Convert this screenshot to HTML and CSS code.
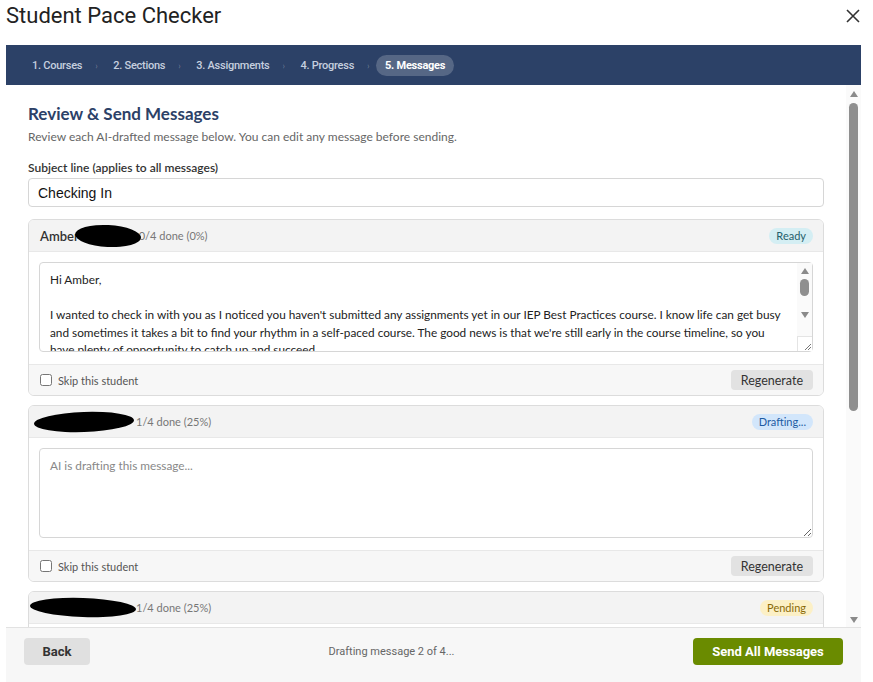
FILE: index.html
```html
<!DOCTYPE html>
<html lang="en">
<head>
  <meta charset="UTF-8">
  <meta name="viewport" content="width=device-width, initial-scale=1.0">
  <title>Student Pace Checker</title>
  <link rel="stylesheet" href="styles.css">
</head>
<body>
  <div class="modal">
    <header class="modal-head">
      <h1>Student Pace Checker</h1>
      <button class="close-btn" aria-label="Close">
        <svg width="14" height="14" viewBox="0 0 14 14"><path d="M1 1 L13 13 M13 1 L1 13" stroke="#333" stroke-width="1.6" fill="none"/></svg>
      </button>
    </header>

    <nav class="steps">
      <span class="step">1. Courses</span><span class="sep">›</span>
      <span class="step">2. Sections</span><span class="sep">›</span>
      <span class="step">3. Assignments</span><span class="sep">›</span>
      <span class="step">4. Progress</span><span class="sep">›</span>
      <span class="step active">5. Messages</span>
    </nav>

    <div class="content-wrap">
      <main class="scroll-area">
        <h2>Review &amp; Send Messages</h2>
        <p class="intro">Review each AI-drafted message below. You can edit any message before sending.</p>

        <label class="field-label" for="subject">Subject line (applies to all messages)</label>
        <input id="subject" class="subject" value="Checking In">

        <div class="card">
          <div class="card-head">
            <div class="who">
              <span class="name">Amber</span><span class="redact r1"></span><span class="done">0/4 done (0%)</span>
            </div>
            <span class="badge ready">Ready</span>
          </div>
          <div class="card-body">
            <div class="msg-wrap">
              <textarea class="msg has-scroll">Hi Amber,

I wanted to check in with you as I noticed you haven't submitted any assignments yet in our IEP Best Practices course. I know life can get busy and sometimes it takes a bit to find your rhythm in a self-paced course. The good news is that we're still early in the course timeline, so you have plenty of opportunity to catch up and succeed.

A good first step would be to log in and take a look at the first module. Each assignment builds on the last, so starting now will make the rest of the course feel much more manageable.

If anything is getting in the way, whether it's technical trouble, questions about the content, or just finding the time, please let me know. I'm happy to help you put together a plan that works for you.

Looking forward to seeing your work!

Best,
Your Instructor</textarea>
              <div class="ta-scroll">
                <span class="arrow up"></span>
                <div class="ta-track"><span class="ta-thumb"></span></div>
                <span class="arrow down"></span>
                <span class="ta-corner">
                  <svg width="9" height="9" viewBox="0 0 9 9"><path d="M8 2 L2 8 M8 5 L5 8" stroke="#777" stroke-width="1"/></svg>
                </span>
              </div>
            </div>
          </div>
          <div class="card-foot">
            <label class="skip"><input type="checkbox"> Skip this student</label>
            <button class="regen">Regenerate</button>
          </div>
        </div>

        <div class="card">
          <div class="card-head">
            <div class="who">
              <span class="redact r2"></span><span class="done">1/4 done (25%)</span>
            </div>
            <span class="badge drafting">Drafting...</span>
          </div>
          <div class="card-body">
            <textarea class="msg" placeholder="AI is drafting this message..."></textarea>
          </div>
          <div class="card-foot">
            <label class="skip"><input type="checkbox"> Skip this student</label>
            <button class="regen">Regenerate</button>
          </div>
        </div>

        <div class="card">
          <div class="card-head">
            <div class="who">
              <span class="redact r3"></span><span class="done">1/4 done (25%)</span>
            </div>
            <span class="badge pending">Pending</span>
          </div>
          <div class="card-body">
            <textarea class="msg" placeholder="Waiting to draft..."></textarea>
          </div>
          <div class="card-foot">
            <label class="skip"><input type="checkbox"> Skip this student</label>
            <button class="regen">Regenerate</button>
          </div>
        </div>

        <div class="card">
          <div class="card-head">
            <div class="who">
              <span class="redact r2"></span><span class="done">2/4 done (50%)</span>
            </div>
            <span class="badge pending">Pending</span>
          </div>
          <div class="card-body">
            <textarea class="msg" placeholder="Waiting to draft..."></textarea>
          </div>
          <div class="card-foot">
            <label class="skip"><input type="checkbox"> Skip this student</label>
            <button class="regen">Regenerate</button>
          </div>
        </div>
      </main>

      <div class="vscroll">
        <span class="arrow up"></span>
        <div class="vtrack"><span class="vthumb"></span></div>
        <span class="arrow down"></span>
      </div>
    </div>

    <footer class="modal-foot">
      <button class="back-btn">Back</button>
      <span class="status">Drafting message 2 of 4...</span>
      <button class="send-btn">Send All Messages</button>
    </footer>
  </div>
</body>
</html>
```

FILE: styles.css
```css
* {
  box-sizing: border-box;
}
html, body {
  margin: 0;
  height: 100%;
  background: #fff;
  font-family: 'Segoe UI', Lato, sans-serif;
  color: #333;
}
.modal {
  height: 682px;
  padding: 0 12px 0 6px;
  display: flex;
  flex-direction: column;
}

/* Header */
.modal-head {
  height: 45px;
  flex-shrink: 0;
  display: flex;
  justify-content: space-between;
  align-items: flex-start;
}
.modal-head h1 {
  margin: 0;
  padding-top: 2px;
  font-family: Roboto, sans-serif;
  font-weight: 400;
  font-size: 22px;
  line-height: 28px;
  color: #222;
}
.close-btn {
  margin-top: 9px;
  margin-right: 1px;
  padding: 0;
  border: none;
  background: none;
  width: 14px;
  height: 14px;
}

/* Step nav */
.steps {
  height: 40px;
  flex-shrink: 0;
  background: #2c4167;
  display: flex;
  align-items: center;
  gap: 4px;
  padding-left: 17px;
}
.step {
  font-family: Roboto, sans-serif;
  font-size: 11px;
  font-weight: 500;
  letter-spacing: -0.25px;
  color: #c6cfdf;
  padding: 4px 9px 3px;
  border-radius: 11px;
  line-height: 14px;
}
.step.active {
  background: rgba(255, 255, 255, 0.2);
  color: #fff;
  font-weight: 700;
}
.sep {
  color: rgba(255, 255, 255, 0.3);
  font-size: 9px;
  width: 5px;
}

/* Scrolling content */
.content-wrap {
  flex: 1;
  min-height: 0;
  display: flex;
}
.scroll-area {
  flex: 1;
  overflow: hidden;
  padding: 18px 22px 20px;
}
.vscroll {
  width: 15px;
  background: #fafafa;
  display: flex;
  flex-direction: column;
  align-items: center;
}
.vtrack {
  flex: 1;
  width: 100%;
  padding: 2px 3px 0;
}
.vthumb {
  display: block;
  height: 308px;
  background: #8f8f8f;
  border-radius: 5px;
}
.arrow {
  width: 0;
  height: 0;
  border-left: 4.5px solid transparent;
  border-right: 4.5px solid transparent;
  flex-shrink: 0;
}
.arrow.up {
  border-bottom: 6px solid #8a8a8a;
  margin: 6px 0 4px;
}
.arrow.down {
  border-top: 6px solid #8a8a8a;
  margin: 4px 0 4px;
}

h2 {
  margin: 0;
  font-size: 17px;
  line-height: 22px;
  font-weight: 700;
  color: #2c4167;
}
.intro {
  margin: 4px 0 0;
  font-size: 12px;
  line-height: 16px;
  color: #666;
}
.field-label {
  display: block;
  margin-top: 15px;
  font-size: 12px;
  line-height: 16px;
  font-weight: 600;
  color: #333;
}
.subject {
  display: block;
  width: 100%;
  height: 29px;
  margin-top: 2px;
  padding: 0 9px;
  border: 1px solid #d6d6d6;
  border-radius: 4px;
  font-family: 'Liberation Sans', Arial, sans-serif;
  font-size: 14px;
  color: #111;
  outline: none;
}

/* Student cards */
.card {
  margin-top: 12px;
  border: 1px solid #dcdcdc;
  border-radius: 6px;
  overflow: hidden;
}
.card + .card {
  margin-top: 9px;
}
.card-head {
  height: 32px;
  background: #f3f3f3;
  border-bottom: 1px solid #e8e8e8;
  display: flex;
  align-items: center;
  justify-content: space-between;
  padding: 0 10px 0 11px;
}
.who {
  display: flex;
  align-items: center;
}
.name {
  font-size: 13px;
  font-weight: 600;
  color: #333;
}
.done {
  font-size: 11px;
  color: #777;
}
.redact {
  display: inline-block;
  background: #000;
  border-radius: 50%;
}
.redact.r1 {
  width: 66px;
  height: 22px;
  margin: 0 -2px 0 -4px;
  transform: rotate(3deg);
}
.redact.r2 {
  width: 100px;
  height: 20px;
  margin: 0 2px 0 -6px;
  transform: rotate(-2deg);
}
.redact.r3 {
  width: 106px;
  height: 19px;
  margin: 0 0 0 -10px;
  transform: rotate(2deg);
}
.badge {
  font-size: 11px;
  line-height: 16px;
  padding: 0 7px;
  border-radius: 8px;
}
.badge.ready {
  background: #d4eef3;
  color: #255f6c;
}
.badge.drafting {
  background: #d2e6fb;
  color: #1d5ba3;
}
.badge.pending {
  background: #fcf0c6;
  color: #8a6a06;
}

.card-body {
  padding: 10px 10px 12px;
  background: #fff;
}
.msg-wrap {
  position: relative;
}
.msg {
  display: block;
  width: 100%;
  height: 90px;
  padding: 8px 10px;
  border: 1px solid #d6d6d6;
  border-radius: 4px;
  font-family: 'Segoe UI', Lato, sans-serif;
  font-size: 11.8px;
  line-height: 17.5px;
  color: #222;
  resize: vertical;
  outline: none;
}
.msg.has-scroll {
  padding-right: 25px;
  overflow: hidden;
}
.msg::placeholder {
  color: #888;
}

/* drawn textarea scrollbar, sits over the textarea's right edge */
.ta-scroll {
  position: absolute;
  top: 1px;
  right: 1px;
  bottom: 1px;
  width: 15px;
  background: #fafafa;
  display: flex;
  flex-direction: column;
  align-items: center;
}
.ta-scroll .arrow.up {
  margin: 5px 0 5px;
}
.ta-scroll .arrow.down {
  margin: 5px 0 5px;
}
.ta-track {
  width: 100%;
  height: 28px;
  padding: 0 3px;
}
.ta-thumb {
  display: block;
  height: 17px;
  background: #8f8f8f;
  border-radius: 5px;
}
.ta-corner {
  margin-top: auto;
  width: 15px;
  height: 15px;
  border-top: 1px solid #e4e4e4;
  border-left: 1px solid #e4e4e4;
  display: flex;
  align-items: flex-end;
  justify-content: flex-end;
  background: #fff;
}
.ta-corner svg {
  display: block;
}

.card-foot {
  height: 31px;
  background: #f7f7f7;
  border-top: 1px solid #e8e8e8;
  display: flex;
  align-items: center;
  justify-content: space-between;
  padding: 0 10px 0 11px;
}
.skip {
  display: flex;
  align-items: center;
  gap: 6px;
  font-size: 11px;
  color: #555;
}
.skip input {
  margin: 0;
  width: 12px;
  height: 12px;
}
.regen {
  height: 20px;
  padding: 0 10px;
  border: none;
  border-radius: 4px;
  background: #e2e2e2;
  font-family: 'Segoe UI', Lato, sans-serif;
  font-size: 12.5px;
  color: #333;
}

/* Footer */
.modal-foot {
  height: 55px;
  flex-shrink: 0;
  background: #f7f7f7;
  border-top: 1px solid #e2e2e2;
  display: flex;
  align-items: flex-start;
  justify-content: space-between;
  padding: 10px 18px 0;
}
.back-btn,
.send-btn {
  height: 27px;
  border: none;
  border-radius: 4px;
  font-family: Roboto, sans-serif;
  font-size: 13px;
  font-weight: 700;
}
.back-btn {
  width: 66px;
  background: #e0e0e0;
  color: #333;
}
.send-btn {
  width: 150px;
  background: #6a8b00;
  color: #fff;
}
.status {
  font-family: Roboto, sans-serif;
  font-size: 11px;
  color: #666;
  line-height: 27px;
}
```
